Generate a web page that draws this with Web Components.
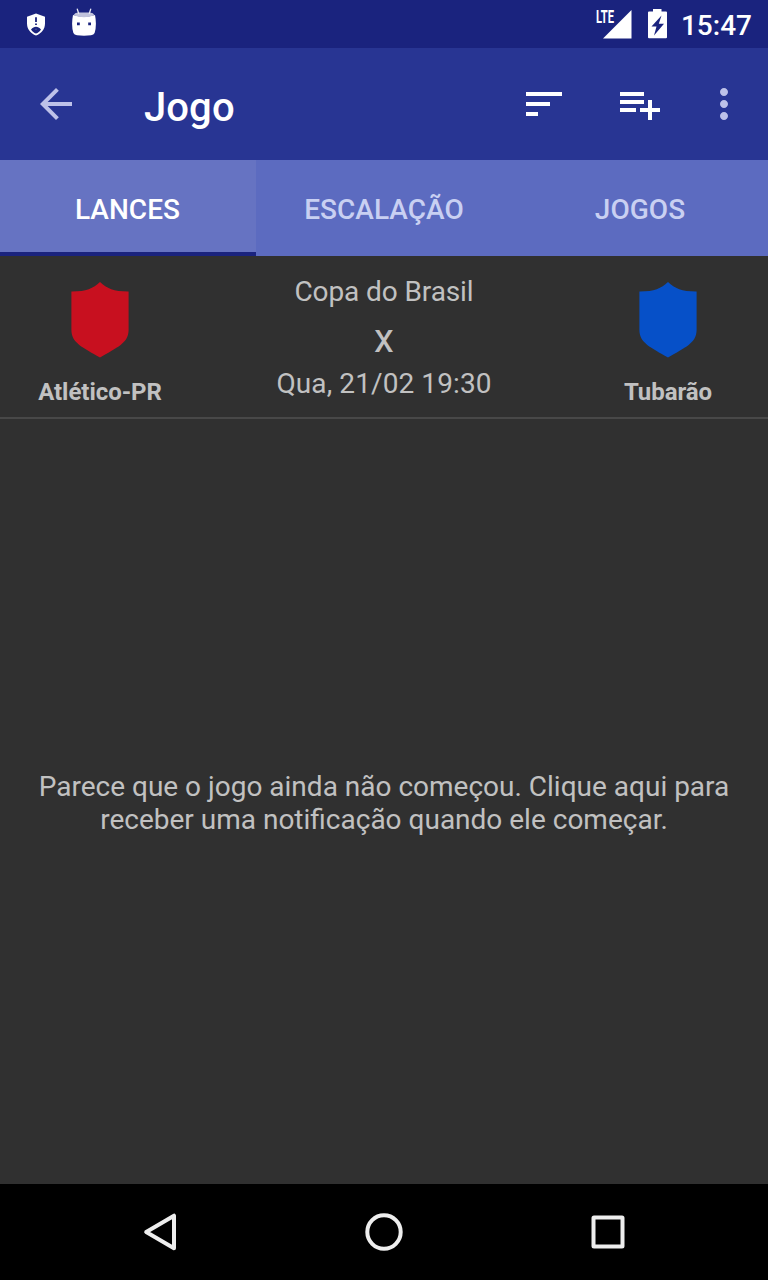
<!DOCTYPE html>
<html lang="pt-BR">
<head>
    <meta charset="UTF-8">
    <meta name="viewport" content="width=device-width, initial-scale=1.0">
    <title>Jogo</title>
    <style>
        html, body {
            margin: 0;
            height: 100%;
        }

        body {
            background: #303030;
            color: #c1c1c1;
            font-family: Roboto, "Noto Sans", sans-serif;
            overflow: hidden;
        }
    </style>
</head>
<body>

<match-screen></match-screen>

<script>
function define(name, html) {
    const template = document.createElement('template');
    template.innerHTML = html;
    customElements.define(name, class extends HTMLElement {
        constructor() {
            super();
            this.attachShadow({ mode: 'open' }).appendChild(template.content.cloneNode(true));
        }
    });
}

define('status-bar', `
    <style>
        :host {
            display: flex;
            align-items: center;
            height: 48px;
            box-sizing: border-box;
            padding: 0 16px 0 24px;
            background: #1a237e;
            color: #fff;
        }
        svg { display: block; flex: none; }
        .notifications { display: flex; gap: 24px; flex: 1; }
        .system { display: flex; align-items: center; }
        .lte { font: bold 17.5px Roboto, sans-serif; }
        time { font-size: 28px; font-weight: 500; line-height: 44px; padding-top: 4px; margin-left: 9px; }
    </style>
    <div class="notifications">
        <svg width="24" height="48" viewBox="24 0 24 48">
            <path fill="#fff" d="M36 13.5 L45 16.8 V23.5 C45 29 41.5 33.5 36 35.6 C30.5 33.5 27 29 27 23.5 V16.8 Z"/>
            <path stroke="#1a237e" stroke-width="1.8" d="M36 17.3V22M36 23.4V25"/>
            <path fill="#1a237e" d="M31 29.4 C32.6 27.5 34.2 26.7 36 26.7 S39.4 27.5 41 29.4 C39.6 31.5 38 32.9 36 33.4 C34 32.9 32.4 31.5 31 29.4Z"/>
            <circle cx="36" cy="29.3" r=".7" fill="#5a62a8"/>
        </svg>
        <svg width="24" height="48" viewBox="72 0 24 48">
            <path fill="#fff" d="M73 15 Q84 18.5 95 15 Q97 25 94.6 33 Q93.8 35 91 35.3 Q84 36.2 77 35.3 Q74.2 35 73.4 33 Q71 25 73 15Z"/>
            <path fill="#c1c3dc" d="M73.5 15.3 Q74.6 12.7 78 12.6 H90 Q93.4 12.7 94.5 15.3 Q89 17.3 84 17.3 Q79 17.3 73.5 15.3Z"/>
            <path stroke="#e8e9f4" stroke-width="1.3" stroke-linecap="round" d="M78.7 13.5 L77.3 9.2 M89.3 13.5 L90.7 9.2"/>
            <path fill="#1a237e" d="M77 22.5h2.8v2.8H77zM88.2 22.5h2.8v2.8h-2.8z"/>
        </svg>
    </div>
    <div class="system">
        <svg width="76" height="48" viewBox="596 0 76 48">
            <text class="lte" x="596" y="22.7" fill="#fff" textLength="18" lengthAdjust="spacingAndGlyphs">LTE</text>
            <path fill="#fff" d="M631.5 10V38.5H603Z"/>
            <path fill="#fff" fill-rule="evenodd" d="M653 11.5V9h8.5v2.5H666q1 0 1 1V37.2q0 1-1 1H649q-1 0-1-1V12.500q0-1 1-1ZM661.500 15.500 L651.500 26.600 H656.500 L654 35.500 L664 23.800 H658.800Z"/>
        </svg>
        <time>15:47</time>
    </div>
`);

define('app-bar', `
    <style>
        :host {
            display: flex;
            align-items: center;
            height: 112px;
            box-sizing: border-box;
            padding: 0 20px 0 32px;
            background: #283593;
            color: #fff;
        }
        svg { display: block; flex: none; }
        h1 { flex: 1; margin: 0; padding: 7px 0 0 64px; font-size: 40px; font-weight: 500; line-height: 48px; letter-spacing: .1px; }
        .actions { display: flex; gap: 48px; }
    </style>
    <svg width="48" height="48" viewBox="0 0 24 24" fill="#bec2e9"><path d="M20 11H7.830l5.590-5.590L12 4l-8 8 8 8 1.410-1.410L7.830 13H20v-2z"/></svg>
    <h1><slot></slot></h1>
    <div class="actions">
        <svg width="48" height="48" viewBox="0 0 24 24" fill="#fff"><path d="M3 18h6v-2H3v2zM3 6v2h18V6H3zm0 7h12v-2H3v2z"/></svg>
        <svg width="48" height="48" viewBox="0 0 24 24" fill="#fff"><path d="M14 10H2v2h12v-2zm0-4H2v2h12V6zm4 8v-4h-2v4h-4v2h4v4h2v-4h4v-2h-4zM2 16h8v-2H2v2z"/></svg>
        <svg width="48" height="48" viewBox="0 0 24 24" fill="#bec2e9" style="margin-left: -12px"><path d="M12 8c1.100 0 2-.9 2-2s-.9-2-2-2-2 .9-2 2 .9 2 2 2zm0 2c-1.100 0-2 .9-2 2s.9 2 2 2 2-.9 2-2-.9-2-2-2zm0 6c-1.100 0-2 .9-2 2s.9 2 2 2 2-.9 2-2-.9-2-2-2z"/></svg>
    </div>
`);

define('tab-bar', `
    <style>
        :host {
            display: grid;
            grid-template-columns: repeat(3, 1fr);
            height: 96px;
            background: #5c6bc0;
        }
    </style>
    <slot></slot>
`);

define('tab-item', `
    <style>
        :host {
            display: block;
            box-sizing: border-box;
            height: 96px;
            border-bottom: 4px solid transparent;
            padding-top: 7px;
            line-height: 85px;
            text-align: center;
            font-size: 28px;
            font-weight: 500;
            letter-spacing: .05px;
            color: #c9d0f2;
        }
        :host([selected]) {
            background: #6673c2;
            border-bottom-color: #1a237e;
            padding-right: 1px;
            color: #fff;
        }
    </style>
    <slot></slot>
`);

define('team-badge', `
    <style>
        :host {
            display: flex;
            flex-direction: column;
            align-items: center;
            width: 200px;
            font-size: 24px;
            font-weight: bold;
            line-height: 28px;
            letter-spacing: -.05px;
        }
        svg { display: block; margin: 26px 0 20px; fill: var(--team-color); }
    </style>
    <svg width="58" height="76" viewBox="0 0 58 76"><path d="M29 0C36 6.500 43 9.600 57.600 9.500V48C57.600 61 46 65.500 29 75.600C12 65.500.4 61 .4 48V9.500C15 9.600 22 6.500 29 0Z"/></svg>
    <slot></slot>
`);

define('match-header', `
    <style>
        :host {
            display: flex;
            justify-content: space-between;
            height: 163px;
            box-sizing: border-box;
            border-bottom: 2px solid #484848;
        }
        .info {
            display: flex;
            flex-direction: column;
            align-items: center;
            padding-top: 19px;
            font-size: 28px;
            line-height: 34px;
        }
        .league { letter-spacing: -.1px; }
        .score { font-size: 40px; line-height: 48px; margin: 6px 0 4px; }
        .date { letter-spacing: .1px; }
    </style>
    <slot name="home"></slot>
    <div class="info">
        <div class="league"><slot name="league"></slot></div>
        <div class="score"><slot name="score"></slot></div>
        <div class="date"><slot name="date"></slot></div>
    </div>
    <slot name="away"></slot>
`);

define('empty-message', `
    <style>
        :host {
            flex: 1;
            display: flex;
            align-items: center;
            justify-content: center;
            padding: 2px 32px 0;
            text-align: center;
            font-size: 28px;
            line-height: 33px;
        }
    </style>
    <div><slot></slot></div>
`);

define('nav-bar', `
    <style>
        :host {
            display: flex;
            align-items: center;
            justify-content: center;
            gap: 176px;
            height: 96px;
            background: #000;
        }
        svg { display: block; fill: none; stroke: #eee; stroke-width: 4; stroke-linejoin: round; }
    </style>
    <svg width="48" height="48" viewBox="0 0 48 48"><path d="M10.200 24 38 7.700V40.300Z"/></svg>
    <svg width="48" height="48" viewBox="0 0 48 48"><circle cx="24" cy="24" r="16.700"/></svg>
    <svg width="48" height="48" viewBox="0 0 48 48"><rect x="9.500" y="9.500" width="29" height="29" rx=".5"/></svg>
`);

define('match-screen', `
    <style>
        :host {
            display: flex;
            flex-direction: column;
            width: 768px;
            height: 1280px;
        }
    </style>
    <status-bar></status-bar>
    <app-bar>Jogo</app-bar>
    <tab-bar>
        <tab-item selected>LANCES</tab-item>
        <tab-item>ESCALAÇÃO</tab-item>
        <tab-item>JOGOS</tab-item>
    </tab-bar>
    <match-header>
        <team-badge slot="home" style="--team-color: #c8101f">Atlético-PR</team-badge>
        <span slot="league">Copa do Brasil</span>
        <span slot="score">x</span>
        <span slot="date">Qua, 21/02 19:30</span>
        <team-badge slot="away" style="--team-color: #0650c8">Tubarão</team-badge>
    </match-header>
    <empty-message>Parece que o jogo ainda não começou. Clique aqui para receber uma notificação quando ele começar.</empty-message>
    <nav-bar></nav-bar>
`);
</script>

</body>
</html>
